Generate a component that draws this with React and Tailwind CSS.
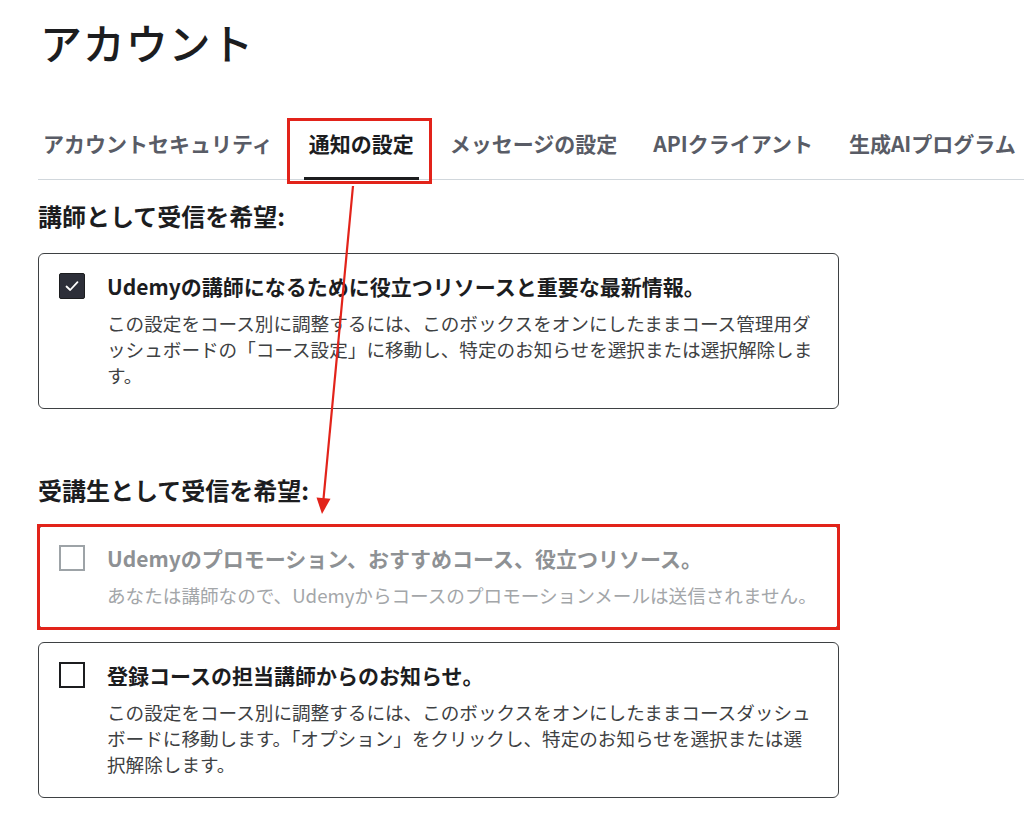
const tabs = [
  { label: "アカウントセキュリティ" },
  { label: "通知の設定", active: true },
  { label: "メッセージの設定" },
  { label: "APIクライアント" },
  { label: "生成AIプログラム" },
];

const CheckBox = ({ checked, disabled }) => {
  if (checked) {
    return (
      <span className="mt-[1px] flex h-[26px] w-[26px] shrink-0 items-center justify-center rounded-[2px] border border-[#1c1d1f] bg-[#2d2f39]">
        <svg width="16" height="16" viewBox="0 0 16 16" fill="none">
          <path
            d="M2.5 8.5 L6.2 12 L13.5 4.2"
            stroke="white"
            strokeWidth="1.8"
            strokeLinecap="round"
            strokeLinejoin="round"
          />
        </svg>
      </span>
    );
  }
  return (
    <span
      className={
        disabled
          ? "mt-[1px] block h-[26px] w-[26px] shrink-0 border-2 border-[#9da3a7]"
          : "mt-[1px] block h-[26px] w-[26px] shrink-0 border-2 border-[#1c1d1f]"
      }
    ></span>
  );
};

const SettingBox = ({ checked, disabled, title, children }) => (
  <div className="relative flex items-start gap-[22px] rounded-[6px] border border-[#3e4143] pt-[18px] pb-[20px] pl-[20px] pr-[20px]">
    <CheckBox checked={checked} disabled={disabled} />
    <div className="min-w-0 flex-1">
      <p
        className={
          disabled
            ? "text-[21px] font-bold leading-[28px] text-[#8e9194]"
            : "text-[21px] font-bold leading-[28px] text-[#1c1d1f]"
        }
      >
        {title}
      </p>
      <p
        className={
          disabled
            ? "mt-[10px] text-[18.6px] leading-[26px] text-[#a3a6a9]"
            : "mt-[10px] text-[18.6px] leading-[26px] text-[#3e4143]"
        }
      >
        {children}
      </p>
    </div>
  </div>
);

export default function App() {
  return (
    <div className="relative min-h-[817px] w-full overflow-hidden bg-white pt-[17px] pl-[38px] font-['Noto_Sans_CJK_JP','Noto_Sans',sans-serif] text-[#1c1d1f]">
      {/* Title */}
      <h1 className="pl-[2px] text-[42px] font-medium leading-[50px] tracking-[0.02em] text-[#1c1d1f]">
        アカウント
      </h1>

      {/* Tabs */}
      <div className="mt-[55px] flex gap-[26px] whitespace-nowrap border-b border-[#d1d7dc]">
        {tabs.map((t) => (
          <button
            key={t.label}
            className={
              t.active
                ? "relative shrink-0 px-[5px] pt-[6px] pb-[21px] text-[21px] font-bold leading-[30px] text-[#1c1d1f]"
                : "relative shrink-0 px-[5px] pt-[6px] pb-[21px] text-[21px] font-bold leading-[30px] text-[#595c66]"
            }
          >
            {t.label}
            {t.active && (
              <span className="absolute right-0 bottom-[-1px] left-0 h-[3px] bg-[#1c1d1f]"></span>
            )}
          </button>
        ))}
      </div>

      <div className="w-[801px]">
        {/* Instructor */}
        <h2 className="mt-[20px] text-[24px] font-bold leading-[32px]">
          講師として受信を希望:
        </h2>
        <div className="mt-[21px]">
          <SettingBox
            checked
            title="Udemyの講師になるために役立つリソースと重要な最新情報。"
          >
            この設定をコース別に調整するには、このボックスをオンにしたままコース管理用ダッシュボードの「コース設定」に移動し、特定のお知らせを選択または選択解除します。
          </SettingBox>
        </div>

        {/* Student */}
        <h2 className="mt-[65px] text-[24px] font-bold leading-[32px]">
          受講生として受信を希望:
        </h2>
        <div className="relative mt-[19px]">
          <SettingBox
            disabled
            title="Udemyのプロモーション、おすすめコース、役立つリソース。"
          >
            あなたは講師なので、Udemyからコースのプロモーションメールは送信されません。
          </SettingBox>
          {/* annotation box */}
          <div className="pointer-events-none absolute inset-[-1px] border-[3px] border-[#e2231a]"></div>
        </div>
        <div className="mt-[13px]">
          <SettingBox title="登録コースの担当講師からのお知らせ。">
            この設定をコース別に調整するには、このボックスをオンにしたままコースダッシュボードに移動します。「オプション」をクリックし、特定のお知らせを選択または選択解除します。
          </SettingBox>
        </div>
      </div>

      {/* annotation: tab highlight */}
      <div className="pointer-events-none absolute top-[118px] left-[287px] h-[66px] w-[145px] border-[3px] border-[#e2231a]"></div>

      {/* annotation: arrow */}
      <svg
        className="pointer-events-none absolute top-0 left-0"
        width="1024"
        height="817"
        viewBox="0 0 1024 817"
      >
        <line
          x1="353"
          y1="186"
          x2="323.5"
          y2="499"
          stroke="#e2231a"
          strokeWidth="2.2"
        />
        <polygon points="322,514 330.5,498.8 316.5,497.4" fill="#e2231a" />
      </svg>
    </div>
  );
}
